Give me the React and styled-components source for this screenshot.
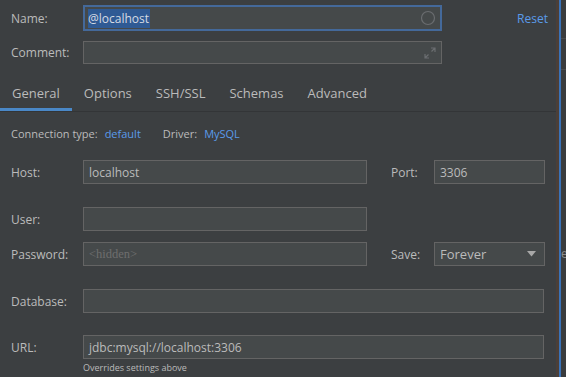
import styled, { createGlobalStyle } from 'styled-components';

const GlobalStyle = createGlobalStyle`
  html, body {
    margin: 0;
    padding: 0;
    background: #3c3f41;
  }
  body {
    font-family: "Open Sans", "Noto Sans", sans-serif;
    color: #bbbbbb;
  }
`;

const Window = styled.div`
  display: flex;
  width: 566px;
  height: 377px;
  overflow: hidden;
  background: #3c3f41;
`;

const Main = styled.div`
  width: 556px;
  flex: none;
  display: flex;
  flex-direction: column;
`;

const EdgeLine = styled.div`
  width: 3px;
  flex: none;
  background: #4b3f38;
`;

const BlueLine = styled.div`
  width: 2px;
  flex: none;
  background: #3a73b8;
`;

const SidePanel = styled.div`
  flex: 1;
  background: #3a3c3e;
  position: relative;
  font-size: 12px;
  color: #8c8c8c;
  overflow: hidden;

  & > span {
    position: absolute;
    left: 0;
    top: 245px;
  }
`;

const SideRule = styled.div`
  height: 1px;
  background: #4a4c4e;
  margin-top: ${p => p.$top}px;
`;

const TopRow = styled.div`
  display: flex;
  align-items: center;
  padding-left: 11px;
  height: ${p => p.$h}px;
  margin-top: ${p => p.$mt || 0}px;
`;

const Label = styled.div`
  width: ${p => p.$w || 72}px;
  flex: none;
  font-size: 12px;
  color: #bbbbbb;
`;

const Field = styled.div`
  box-sizing: border-box;
  width: ${p => p.$w}px;
  height: ${p => p.$h || 24}px;
  flex: none;
  display: flex;
  align-items: center;
  padding: 0 5px;
  background: #45494a;
  border: 1px solid #646464;
  font-size: 12px;
  color: #bbbbbb;
  position: relative;
`;

const FocusField = styled(Field)`
  border: 2px solid #44699a;
  padding: 0 3px;
`;

const Selected = styled.span`
  background: #2f5a94;
  color: #d6dbe3;
  padding: 1px 1px 1px 0;
  line-height: 17px;
`;

const TrailIcon = styled.svg`
  position: absolute;
  right: 4px;
  top: 50%;
  transform: translateY(-50%);
`;

const ResetLink = styled.a`
  margin-left: auto;
  margin-right: 8px;
  font-size: 12px;
  color: #5a9bea;
  text-decoration: none;
`;

const Tabs = styled.div`
  display: flex;
  height: 37px;
  margin-top: 10px;
  border-bottom: 1px solid #333537;
`;

const Tab = styled.div`
  box-sizing: border-box;
  padding: 0 12px;
  display: flex;
  align-items: center;
  font-size: 13px;
  color: #bbbbbb;
  border-bottom: 3px solid ${p => (p.$active ? '#4a88c7' : 'transparent')};
  height: 37px;
  padding-top: 3px;
`;

const Info = styled.div`
  display: flex;
  align-items: center;
  gap: 7px;
  padding-left: 11px;
  margin-top: 13px;
  height: 16px;
  font-size: 11px;
  color: #bbbbbb;
`;

const Value = styled.span`
  color: #5a9bea;
  margin-right: ${p => p.$gap || 0}px;
`;

const FormRow = styled.div`
  display: flex;
  align-items: center;
  padding-left: 11px;
  margin-top: ${p => p.$mt}px;
`;

const SideLabel = styled.div`
  width: 43px;
  margin-left: 24px;
  flex: none;
  font-size: 12px;
  color: #bbbbbb;
`;

const Hidden = styled.span`
  font-family: "Liberation Serif", "DejaVu Serif", serif;
  font-size: 12.5px;
  color: #6e6e6e;
`;

const Select = styled(Field)`
  justify-content: space-between;
  padding: 0 8px 0 5px;
  font-size: 13px;
`;

const Hint = styled.div`
  padding-left: 83px;
  margin-top: 2px;
  font-size: 9px;
  color: #bbbbbb;
`;

export default function App() {
  return (
    <Window>
      <GlobalStyle />
      <Main>
        <TopRow $h={26} $mt={5}>
          <Label>Name:</Label>
          <FocusField $w={359} $h={26}>
            <Selected>@localhost</Selected>
            <TrailIcon width="16" height="16" viewBox="0 0 16 16">
              <circle cx="8" cy="8" r="6.5" fill="none" stroke="#6a6d70" strokeWidth="1.2" />
            </TrailIcon>
          </FocusField>
          <ResetLink>Reset</ResetLink>
        </TopRow>
        <TopRow $h={23} $mt={10}>
          <Label>Comment:</Label>
          <Field $w={359} $h={23}>
            <TrailIcon width="14" height="14" viewBox="0 0 14 14">
              <path d="M8 2h4v4M12 2L8.5 5.5M6 12H2V8M2 12l3.5-3.5" fill="none" stroke="#6a6d70" strokeWidth="1.2" />
            </TrailIcon>
          </Field>
        </TopRow>
        <Tabs>
          <Tab $active>General</Tab>
          <Tab>Options</Tab>
          <Tab>SSH/SSL</Tab>
          <Tab>Schemas</Tab>
          <Tab>Advanced</Tab>
        </Tabs>
        <Info>
          <span>Connection type:</span>
          <Value $gap={15}>default</Value>
          <span>Driver:</span>
          <Value>MySQL</Value>
        </Info>
        <FormRow $mt={19}>
          <Label>Host:</Label>
          <Field $w={284}>localhost</Field>
          <SideLabel>Port:</SideLabel>
          <Field $w={111}>3306</Field>
        </FormRow>
        <FormRow $mt={23}>
          <Label>User:</Label>
          <Field $w={284} />
        </FormRow>
        <FormRow $mt={11}>
          <Label>Password:</Label>
          <Field $w={284}>
            <Hidden>&lt;hidden&gt;</Hidden>
          </Field>
          <SideLabel>Save:</SideLabel>
          <Select $w={111}>
            <span>Forever</span>
            <svg width="9" height="6" viewBox="0 0 9 6">
              <path d="M0 0h9L4.5 5.5z" fill="#a8a8a8" />
            </svg>
          </Select>
        </FormRow>
        <FormRow $mt={23}>
          <Label>Database:</Label>
          <Field $w={461} />
        </FormRow>
        <FormRow $mt={22}>
          <Label>URL:</Label>
          <Field $w={461} $h={24}>jdbc:mysql://localhost:3306</Field>
        </FormRow>
        <Hint>Overrides settings above</Hint>
      </Main>
      <EdgeLine />
      <BlueLine />
      <SidePanel>
        <SideRule $top={38} />
        <SideRule $top={30} />
        <span>e</span>
      </SidePanel>
    </Window>
  );
}
